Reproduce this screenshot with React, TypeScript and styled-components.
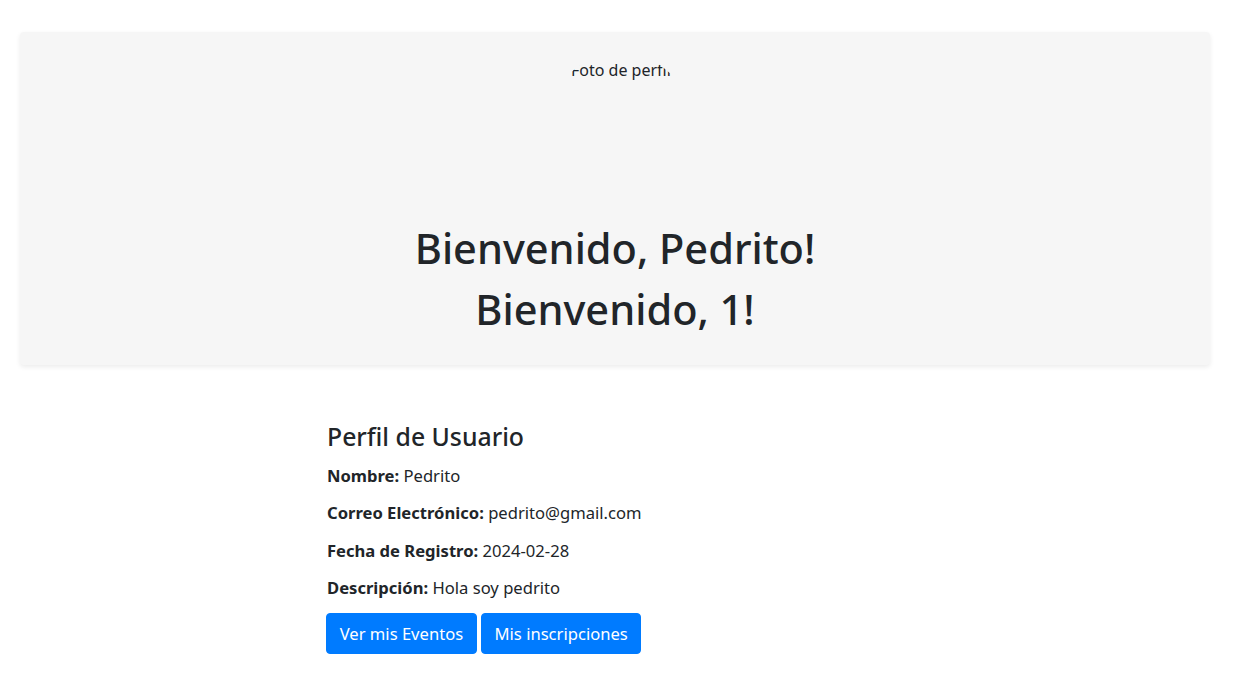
import React from "react";
import styled, { createGlobalStyle } from "styled-components";

const GlobalStyle = createGlobalStyle`
  html, body { margin: 0; padding: 0; background: #ffffff; }
  body {
    font-family: "Noto Sans", "Open Sans", sans-serif;
    color: #212529;
    font-size: 16px;
  }
  * { box-sizing: border-box; }
`;

const Page = styled.div`
  padding: 32px 42px 30px 20px;
`;

const HeaderCard = styled.header`
  background: #f6f6f6;
  border-radius: 4px;
  box-shadow: 0 2px 5px rgba(0, 0, 0, 0.08);
  padding: 18px 16px 25px;
  display: flex;
  flex-direction: column;
  align-items: center;
`;

const Avatar = styled.div`
  width: 144px;
  height: 144px;
  border-radius: 50%;
  overflow: hidden;
  margin: 3px 0 3px 10px;
  padding: 5px 0 0 23px;
  font-size: 16px;
  line-height: 24px;
  white-space: nowrap;
  color: #212529;
`;

const Title = styled.h1`
  margin: 17.5px 0 0;
  font-size: 41.5px;
  font-weight: 500;
  line-height: 61px;
  text-align: center;
`;

const Profile = styled.section`
  padding: 55px 0 0 307px;
`;

const ProfileTitle = styled.h4`
  margin: 0 0 12.5px;
  font-size: 24.8px;
  font-weight: 500;
  line-height: 32px;
`;

const Row = styled.p`
  margin: 0 0 13.3px;
  font-size: 16.6px;
  line-height: 24px;
`;

const Label = styled.strong`
  font-weight: 700;
`;

const Actions = styled.div`
  display: flex;
  gap: 4px;
  margin: 1px 0 0 -1px;
`;

const Button = styled.button`
  font-family: inherit;
  font-size: 16.6px;
  line-height: 24px;
  color: #ffffff;
  background: #007bff;
  border: 1px solid #007bff;
  border-radius: 4px;
  padding: 7.5px 12.7px;
  cursor: pointer;
`;

export default function App() {
  return (
    <>
      <GlobalStyle />
      <Page>
        <HeaderCard>
          <Avatar>Foto de perfil</Avatar>
          <Title>
            Bienvenido, Pedrito!
            <br />
            Bienvenido, 1!
          </Title>
        </HeaderCard>
        <Profile>
          <ProfileTitle>Perfil de Usuario</ProfileTitle>
          <Row>
            <Label>Nombre:</Label> Pedrito
          </Row>
          <Row>
            <Label>Correo Electrónico:</Label> pedrito@gmail.com
          </Row>
          <Row>
            <Label>Fecha de Registro:</Label> 2024-02-28
          </Row>
          <Row>
            <Label>Descripción:</Label> Hola soy pedrito
          </Row>
          <Actions>
            <Button>Ver mis Eventos</Button>
            <Button>Mis inscripciones</Button>
          </Actions>
        </Profile>
      </Page>
    </>
  );
}
